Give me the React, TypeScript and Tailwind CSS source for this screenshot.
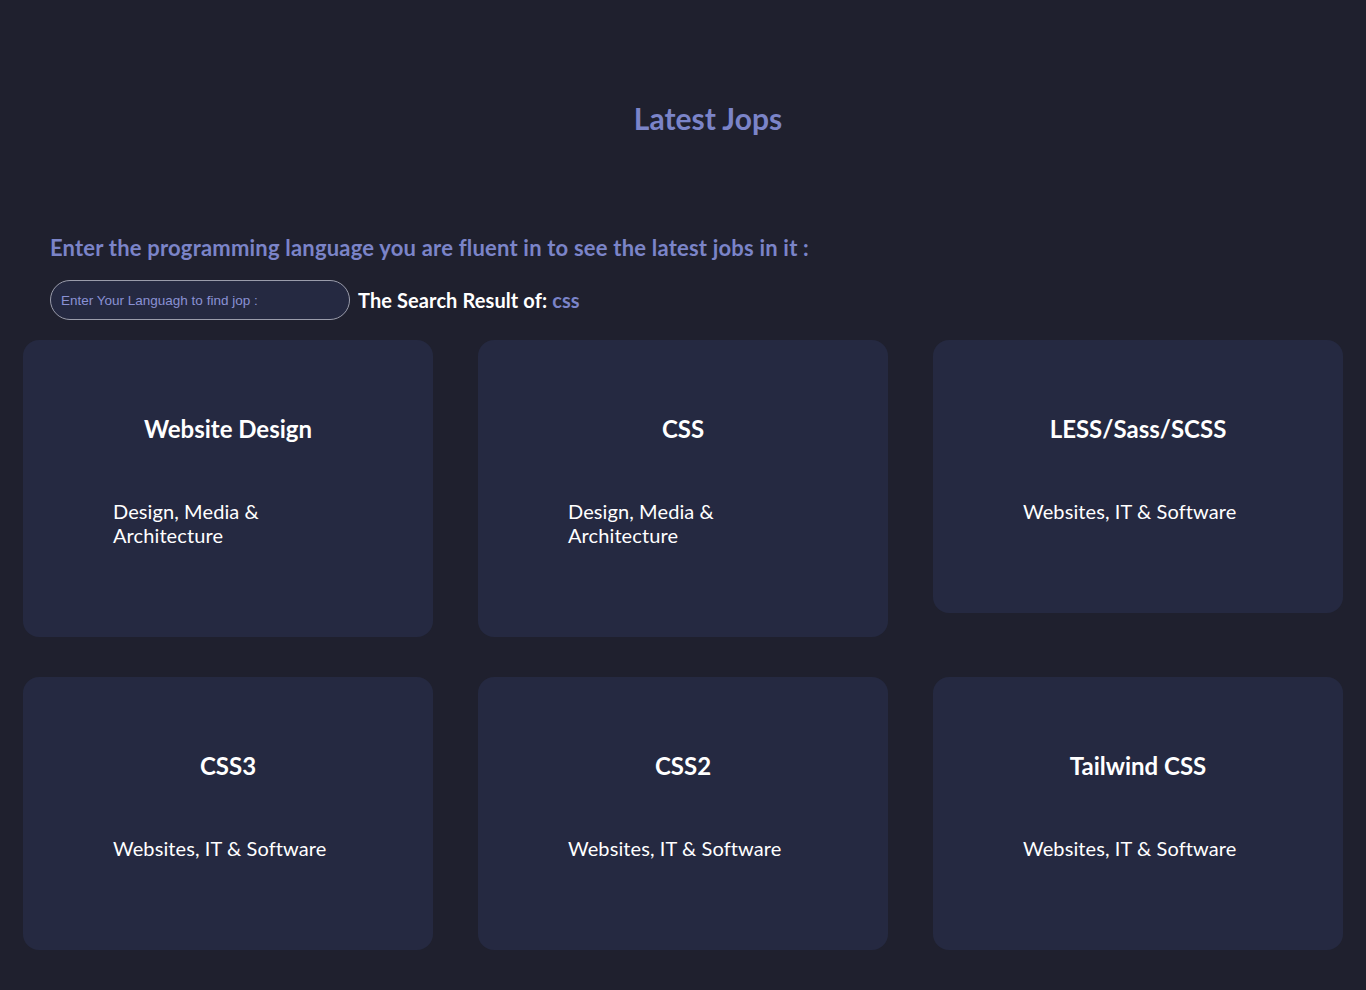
const jobs = [
  { title: "Website Design", category: "Design, Media & Architecture" },
  { title: "CSS", category: "Design, Media & Architecture" },
  { title: "LESS/Sass/SCSS", category: "Websites, IT & Software" },
  { title: "CSS3", category: "Websites, IT & Software" },
  { title: "CSS2", category: "Websites, IT & Software" },
  { title: "Tailwind CSS", category: "Websites, IT & Software" },
];

const JobCard = ({ title, category }: { title: string; category: string }) => {
  return (
    <div className="w-[410px] rounded-2xl bg-[#252941] pt-[73px] pb-[90px]">
      <h3 className="text-center text-[24px] leading-8 font-bold text-white">
        {title}
      </h3>
      <p className="mt-[54px] px-[90px] text-[20px] leading-6 text-white tracking-[0.1px]">
        {category}
      </p>
    </div>
  );
};

const App = () => {
  return (
    <div
      className="min-h-screen bg-[#1f202e] pt-[100px] pb-10"
      style={{ fontFamily: "Lato, 'Noto Sans', sans-serif" }}
    >
      <h1 className="pl-[50px] text-center text-[30px] leading-9 font-bold text-[#7b84c8]">
        Latest Jops
      </h1>
      <div className="mt-[98px] px-[50px]">
        <h2 className="text-[22px] leading-7 font-bold text-[#7b84c8] tracking-[0.2px]">
          Enter the programming language you are fluent in to see the latest
          jobs in it :
        </h2>
        <div className="mt-[18px] flex items-center gap-2">
          <input
            type="text"
            placeholder="Enter Your Languagh to find jop :"
            className="h-10 w-[300px] rounded-full border border-[#9a9cab] bg-[#252941] px-[10px] text-[13.5px] text-[#8a91d4] placeholder:text-[#8a91d4] focus:outline-none"
            style={{ fontFamily: "'Liberation Sans', Arial, sans-serif" }}
          />
          <p className="text-[20px] font-bold text-white tracking-[0.1px]">
            The Search Result of:{" "}
            <span className="text-[#7b84c8]">css</span>
          </p>
        </div>
      </div>
      <div className="mt-5 flex flex-wrap items-start gap-x-[45px] gap-y-10 px-[23px]">
        {jobs.map((job) => (
          <JobCard key={job.title} title={job.title} category={job.category} />
        ))}
      </div>
    </div>
  );
};

export default App;
